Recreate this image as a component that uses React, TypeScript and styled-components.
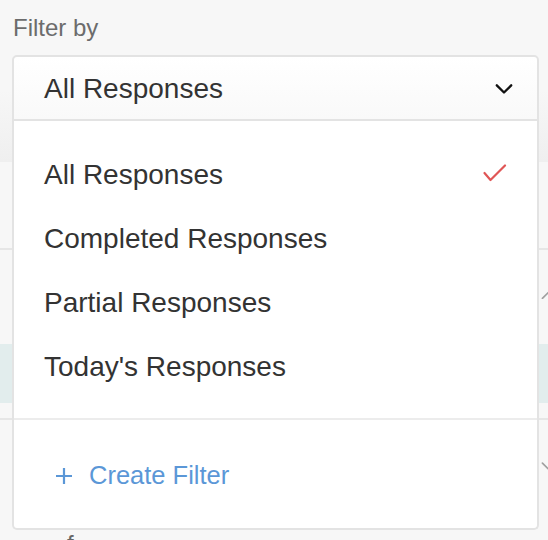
import React from 'react';
import styled, { createGlobalStyle } from 'styled-components';

const GlobalStyle = createGlobalStyle`
  html, body {
    margin: 0;
    padding: 0;
    background: #f7f7f7;
    overflow: hidden;
  }
  body {
    font-family: 'Liberation Sans', Arial, sans-serif;
  }
`;

const options = ['All Responses', 'Completed Responses', 'Partial Responses', "Today's Responses"];

const Chevron = ({ up, color, size, stroke }: { up?: boolean; color: string; size: number; stroke: number }) => (
  <svg width={size} height={size * 0.6} viewBox="0 0 20 12" fill="none">
    <path
      d={up ? 'M2 10.5 L10 2.5 L18 10.5' : 'M2 1.5 L10 9.5 L18 1.5'}
      stroke={color}
      strokeWidth={stroke}
      strokeLinecap="round"
      strokeLinejoin="round"
    />
  </svg>
);

const Check = () => (
  <svg width="24" height="18" viewBox="0 0 24 18" fill="none">
    <path d="M1.5 9 L7.5 16 L22 1.5" stroke="#e05656" strokeWidth="2.2" strokeLinecap="round" strokeLinejoin="round" />
  </svg>
);

const Plus = () => (
  <svg width="18" height="18" viewBox="0 0 18 18" fill="none">
    <path d="M9 1 V17 M1 9 H17" stroke="#5b97d7" strokeWidth="2.2" />
  </svg>
);

export default function App() {
  return (
    <>
      <GlobalStyle />
      <Page>
        <Header>
          <Label>Filter by</Label>
          <SelectWrap>
            <Select>
              <SelectValue>All Responses</SelectValue>
              <Chevron color="#111" size={18} stroke={2.6} />
            </Select>
            <Menu>
              <OptionList>
                {options.map((o, i) => (
                  <Option key={o}>
                    <span>{o}</span>
                    {i === 0 && <Check />}
                  </Option>
                ))}
              </OptionList>
              <Footer>
                <CreateFilter>
                  <Plus />
                  Create Filter
                </CreateFilter>
              </Footer>
            </Menu>
          </SelectWrap>
        </Header>

        <Row height={86} divider />
        <Row height={94}>
          <SideToggle top={41}>
            <Chevron up color="#a0a0a0" size={14} stroke={2.4} />
          </SideToggle>
        </Row>
        <Row height={59} tone="#e2eded" />
        <Row height={15} divider />
        <Row height={120}>
          <SideToggle top={42}>
            <Chevron color="#a0a0a0" size={14} stroke={2.4} />
          </SideToggle>
          <RowText>f</RowText>
        </Row>
      </Page>
    </>
  );
}

const Page = styled.div`
  width: 548px;
  height: 540px;
  overflow: hidden;
  display: flex;
  flex-direction: column;
`;

const Header = styled.div`
  height: 162px;
  flex-shrink: 0;
  padding: 15px 9px 0 12px;
  box-sizing: border-box;
  background: linear-gradient(to bottom, #f7f7f7 0, #f7f7f7 90px, #efefef 162px);
`;

const Label = styled.div`
  font-size: 24px;
  line-height: 26px;
  color: #6c6c6c;
  padding-left: 1px;
  margin-bottom: 14px;
`;

const SelectWrap = styled.div`
  position: relative;
  z-index: 5;
`;

const Select = styled.div`
  height: 66px;
  box-sizing: border-box;
  border: 2px solid #e3e3e3;
  border-radius: 5px 5px 0 0;
  background: linear-gradient(to bottom, #ffffff, #f9f9f9);
  display: flex;
  align-items: center;
  justify-content: space-between;
  padding: 2px 24px 0 30px;
`;

const SelectValue = styled.span`
  font-size: 28px;
  color: #333;
`;

const Menu = styled.div`
  position: absolute;
  top: 100%;
  left: 0;
  right: 0;
  background: #fff;
  border: 2px solid #e3e3e3;
  border-top: none;
  border-radius: 0 0 5px 5px;
`;

const OptionList = styled.div`
  padding: 22px 0 19px;
  border-bottom: 2px solid #ececec;
`;

const Option = styled.div`
  height: 64px;
  display: flex;
  align-items: center;
  justify-content: space-between;
  padding: 0 30px 0 30px;
  font-size: 28px;
  color: #333;
  svg {
    margin-top: -4px;
  }
`;

const Footer = styled.div`
  height: 108px;
  display: flex;
  align-items: center;
  padding: 2px 0 0 41px;
  box-sizing: border-box;
`;

const CreateFilter = styled.div`
  display: flex;
  align-items: center;
  gap: 16px;
  font-size: 25.5px;
  color: #5b97d7;
  svg {
    margin-top: 1px;
  }
`;

const Row = styled.div<{ height: number; tone?: string; divider?: boolean }>`
  position: relative;
  flex-shrink: 0;
  height: ${(p) => p.height}px;
  background: ${(p) => p.tone || '#f7f7f7'};
  border-bottom: ${(p) => (p.divider ? '2px solid #e6e6e6' : 'none')};
`;

const SideToggle = styled.div<{ top: number }>`
  display: flex;
  justify-content: flex-end;
  padding-top: ${(p) => p.top}px;
  margin-right: -7px;
  line-height: 0;
`;

const RowText = styled.div`
  position: absolute;
  left: 67px;
  bottom: -18px;
  font-size: 24px;
  color: #666;
`;
